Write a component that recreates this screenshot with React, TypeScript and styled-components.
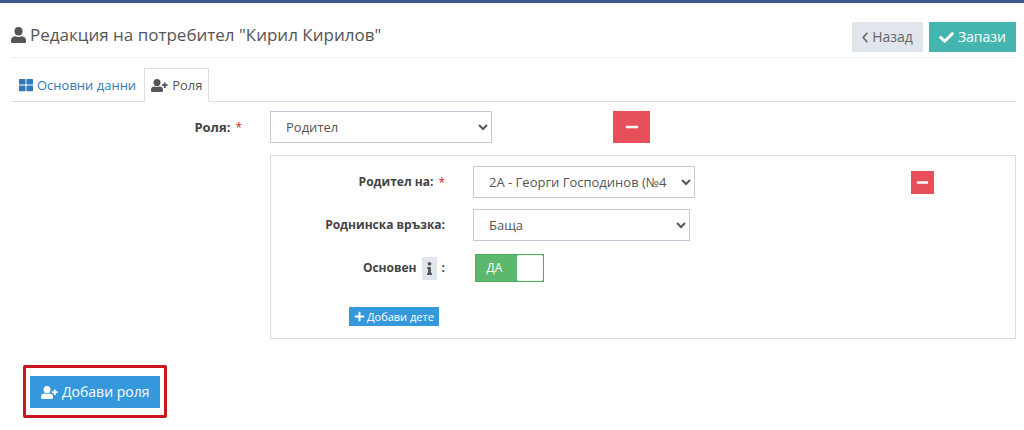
import React from "react";
import styled, { createGlobalStyle } from "styled-components";
import { FaThLarge, FaCheck, FaMinus, FaPlus, FaInfo } from "react-icons/fa";

const GlobalStyle = createGlobalStyle`
  *, *::before, *::after { box-sizing: border-box; }
  body {
    margin: 0;
    background: #fff;
    color: #555;
    font-family: "Open Sans", "Noto Sans", sans-serif;
    font-size: 13px;
    line-height: 20px;
  }
  button, select { font: inherit; border-radius: 0; }
  svg { display: block; flex: none; }
`;

const TopBar = styled.div`
  height: 3px;
  background: #3b5a8e;
`;

const Page = styled.main`
  padding: 0 8px 12px 11px;
`;

const Header = styled.header`
  display: flex;
  align-items: center;
  justify-content: space-between;
  padding: 19px 0 5px;
  border-bottom: 1px solid #eee;
`;

const Title = styled.h1`
  display: flex;
  align-items: center;
  gap: 4px;
  margin: 0;
  padding-bottom: 4px;
  font-size: 17px;
  font-weight: 400;
  line-height: 26px;
  color: #555;
`;

const Actions = styled.div`
  display: flex;
  gap: 6px;
`;

type Tone = "grey" | "teal" | "blue" | "red";
const tones: Record<Tone, [string, string]> = {
  grey: ["#e1e5ec", "#666"],
  teal: ["#45b6af", "#fff"],
  blue: ["#3598dc", "#fff"],
  red: ["#e7505a", "#fff"],
};

const Button = styled.button<{ $tone: Tone; $size?: "small" | "large" }>`
  display: inline-flex;
  align-items: center;
  justify-content: center;
  gap: ${(p) => (p.$size === "small" ? 2 : 4)}px;
  height: ${(p) => (p.$size === "small" ? 19 : p.$size === "large" ? 32 : 30)}px;
  padding: 0 ${(p) => (p.$size === "small" ? 5 : p.$size === "large" ? 11 : 10)}px;
  border: 0;
  background: ${(p) => tones[p.$tone][0]};
  color: ${(p) => tones[p.$tone][1]};
  font-size: ${(p) => (p.$size === "small" ? 11 : 14)}px;
  cursor: pointer;
`;

const RemoveButton = styled(Button)<{ $compact?: boolean }>`
  width: ${(p) => (p.$compact ? 23 : 37)}px;
  height: ${(p) => (p.$compact ? 23 : 32)}px;
  padding: 0;
`;

const Tabs = styled.nav`
  display: flex;
  margin-top: 10px;
  border-bottom: 1px solid #ddd;
`;

const Tab = styled.a<{ $active?: boolean }>`
  display: flex;
  align-items: center;
  gap: 4px;
  height: 34px;
  margin-bottom: -1px;
  padding: 0 ${(p) => (p.$active ? 6 : 7)}px;
  border: 1px solid ${(p) => (p.$active ? "#ddd" : "transparent")};
  border-bottom-color: ${(p) => (p.$active ? "#fff" : "transparent")};
  color: ${(p) => (p.$active ? "#555" : "#337ab7")};
  text-decoration: none;
`;

const RoleRow = styled.div`
  display: grid;
  grid-template-columns: 259fr 343fr 403fr;
  align-items: center;
  margin: 9px 0 12px;
`;

const RoleBody = styled.div`
  display: grid;
  grid-template-columns: 259fr 746fr;
`;

const Panel = styled.section`
  grid-column: 2;
  padding: 10px 0 12px;
  border: 1px solid #ddd;
`;

const ChildRow = styled.div`
  display: grid;
  grid-template-columns: 202fr 438fr 104fr;
  align-items: center;
  margin-bottom: 11px;
`;

const Label = styled.label<{ $nested?: boolean }>`
  display: flex;
  align-items: center;
  justify-content: flex-end;
  gap: 5px;
  padding-right: 28px;
  font-size: ${(p) => (p.$nested ? 12 : 13)}px;
  font-weight: 700;
  color: #444;
  white-space: nowrap;
`;

const Required = styled.span`
  padding-top: 2px;
  color: #e02222;
  font-size: 12px;
  font-weight: 400;
`;

const Select = styled.select<{ $narrow?: boolean }>`
  width: ${(p) => (p.$narrow ? 217 : 222)}px;
  max-width: 100%;
  height: 32px;
  padding: 0 0 0 11px;
  border: 1px solid #c2cad8;
  background: #fff;
  color: #555;
`;

const InfoBadge = styled.span`
  display: inline-flex;
  align-items: center;
  justify-content: center;
  width: 15px;
  height: 23px;
  background: #e1e5ec;
  color: #555;
`;

const Switch = styled.label`
  display: flex;
  align-items: center;
  position: relative;
  width: 69px;
  height: 28px;
  margin: 2px 0 2px 2px;
  border: 1px solid #4fae5f;
  background: #5cb86c;
  color: #fff;
  font-size: 12px;

  input {
    position: absolute;
    inset: 0;
    width: 100%;
    height: 100%;
    margin: 0;
    opacity: 0;
    cursor: pointer;
  }
`;

const SwitchText = styled.span`
  flex: 1;
  padding-right: 4px;
  text-align: center;
`;

const SwitchKnob = styled.span`
  width: 26px;
  height: 26px;
  border-radius: 2px;
  background: #fff;
`;

const AddChild = styled.div`
  display: flex;
  margin: 23px 0 0 78px;
`;

const Highlight = styled.div`
  display: inline-flex;
  margin: 26px 0 0 12px;
  padding: 8px 4px 7px;
  border: 3px solid #c9151e;
  border-radius: 2px;
`;

const PersonIcon = () => (
  <svg width="15" height="16" viewBox="0 0 15 16" fill="currentColor" aria-hidden="true">
    <ellipse cx="7.5" cy="4.2" rx="4" ry="4.2" />
    <path d="M4.200 9.300C1.500 9.600 0 11 0 13.400v1.300c0 .8.500 1.300 1.300 1.300h12.400c.8 0 1.300-.5 1.300-1.300v-1.300c0-2.400-1.500-3.800-4.200-4.100-1 .4-2.100.6-3.300.6s-2.300-.2-3.300-.6z" />
  </svg>
);

const PersonPlusIcon = () => (
  <svg width="17" height="13" viewBox="0 0 17 13" fill="currentColor" aria-hidden="true">
    <ellipse cx="6" cy="3.600" rx="3.500" ry="3.600" />
    <path d="M3.200 7.500C1 7.700 0 8.800 0 10.600v1.200c0 .7.400 1.200 1.100 1.200h9.800c.7 0 1.100-.5 1.100-1.200v-1.200c0-1.800-1-2.900-3.200-3.100-.8.300-1.800.5-2.800.5s-2-.2-2.800-.5z" />
    <path d="M12.800 3.500h1.900v1.800h1.900v1.800h-1.900v1.900h-1.900V7.100h-1.900V5.300h1.900z" />
  </svg>
);

const BackIcon = () => (
  <svg width="6" height="11" viewBox="0 0 6 11" fill="none" stroke="currentColor" strokeWidth="1.600" aria-hidden="true">
    <path d="M5.300.8L1.200 5.500l4.100 4.700" />
  </svg>
);

export default function App() {
  return (
    <>
      <GlobalStyle />
      <TopBar />
      <Page>
        <Header>
          <Title>
            <PersonIcon />
            Редакция на потребител "Кирил Кирилов"
          </Title>
          <Actions>
            <Button type="button" $tone="grey">
              <BackIcon />
              Назад
            </Button>
            <Button type="submit" $tone="teal">
              <FaCheck size={15} />
              Запази
            </Button>
          </Actions>
        </Header>

        <Tabs>
          <Tab href="#main">
            <FaThLarge size={14} />
            Основни данни
          </Tab>
          <Tab href="#role" $active aria-current="page">
            <PersonPlusIcon />
            Роля
          </Tab>
        </Tabs>

        <RoleRow>
          <Label htmlFor="role">
            Роля: <Required>*</Required>
          </Label>
          <Select id="role">
            <option>Родител</option>
          </Select>
          <RemoveButton type="button" $tone="red" aria-label="Премахни роля">
            <FaMinus size={14} />
          </RemoveButton>
        </RoleRow>

        <RoleBody>
          <Panel>
            <ChildRow>
              <Label $nested htmlFor="child">
                Родител на: <Required>*</Required>
              </Label>
              <Select id="child">
                <option>2А - Георги Господинов (№4</option>
              </Select>
              <RemoveButton type="button" $tone="red" $compact aria-label="Премахни дете">
                <FaMinus size={13} />
              </RemoveButton>
            </ChildRow>
            <ChildRow>
              <Label $nested htmlFor="relation">Роднинска връзка:</Label>
              <Select id="relation" $narrow>
                <option>Баща</option>
              </Select>
            </ChildRow>
            <ChildRow>
              <Label $nested htmlFor="primary">
                Основен
                <InfoBadge>
                  <FaInfo size={13} />
                </InfoBadge>
                :
              </Label>
              <Switch>
                <input id="primary" type="checkbox" defaultChecked />
                <SwitchText>ДА</SwitchText>
                <SwitchKnob />
              </Switch>
            </ChildRow>
            <AddChild>
              <Button type="button" $tone="blue" $size="small">
                <FaPlus size={11} />
                Добави дете
              </Button>
            </AddChild>
          </Panel>
        </RoleBody>

        <Highlight>
          <Button type="button" $tone="blue" $size="large">
            <PersonPlusIcon />
            Добави роля
          </Button>
        </Highlight>
      </Page>
    </>
  );
}
